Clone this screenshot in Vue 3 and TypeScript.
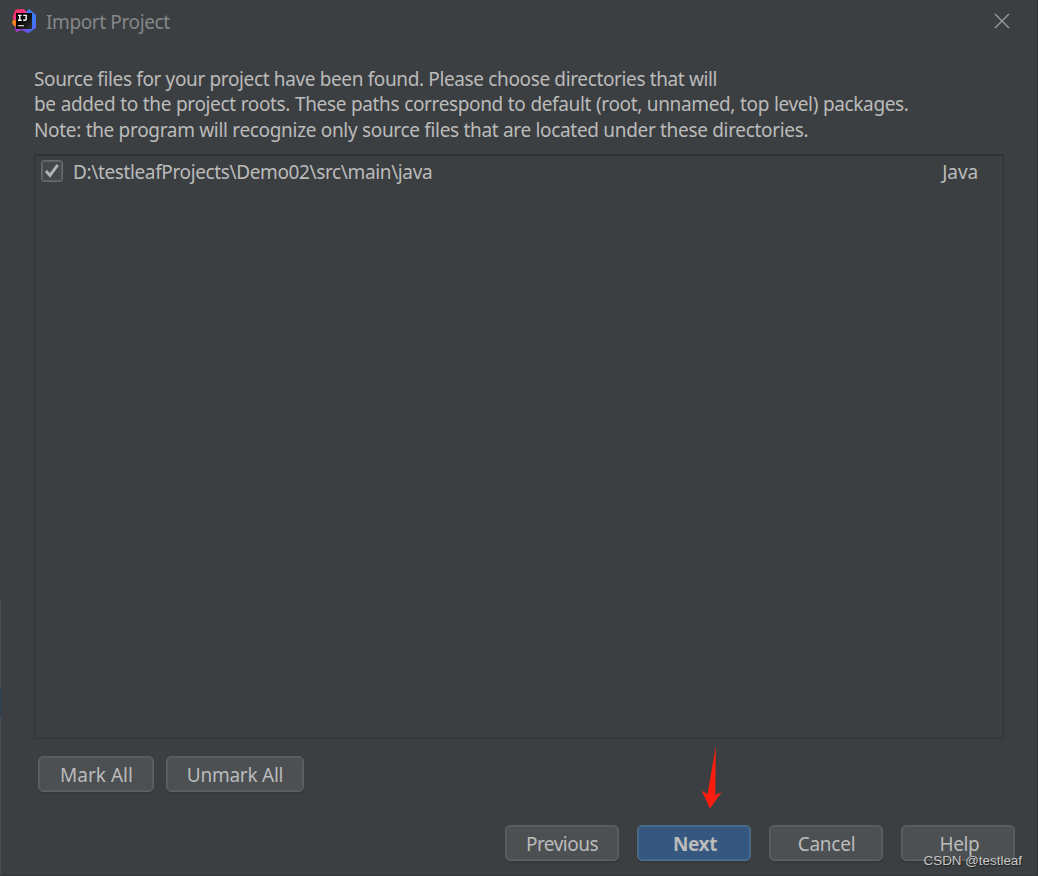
<script setup lang="ts">
import { ref } from 'vue'

interface SourceRoot {
  path: string
  language: string
  checked: boolean
}

const roots = ref<SourceRoot[]>([
  { path: 'D:\\testleafProjects\\Demo02\\src\\main\\java', language: 'Java', checked: true },
])

function setAll(checked: boolean): void {
  roots.value.forEach((root) => { root.checked = checked })
}
</script>

<template>
  <div class="dialog">
    <i class="edge"></i>
    <header class="titlebar">
      <svg class="logo" width="26" height="26" viewBox="0 0 26 26">
        <defs>
          <linearGradient id="pink" x1="0" y1="0" x2="1" y2="1">
            <stop offset="0" stop-color="#fe315d" />
            <stop offset="1" stop-color="#e9309c" />
          </linearGradient>
          <linearGradient id="blue" x1="0" y1="0" x2="1" y2="1">
            <stop offset="0" stop-color="#3f7df0" />
            <stop offset="0.6" stop-color="#3a7bf2" />
            <stop offset="1" stop-color="#6b57ff" />
          </linearGradient>
          <linearGradient id="violet" x1="0" y1="0" x2="1" y2="0">
            <stop offset="0" stop-color="#b32fc4" />
            <stop offset="1" stop-color="#4b62f5" />
          </linearGradient>
          <linearGradient id="plate" x1="0" y1="0" x2="1" y2="1">
            <stop offset="0" stop-color="#000" />
            <stop offset="0.5" stop-color="#0b0b0b" />
            <stop offset="1" stop-color="#343434" />
          </linearGradient>
        </defs>
        <path d="M14 5 18 1l7 6v13l-8 5-3-3z" fill="url(#blue)" />
        <path d="M5 17h15v5l-4 3-5-3-6 2-1-4z" fill="url(#violet)" />
        <path d="M1 14 3 11l4 3-2 5-3-2z" fill="#fc801d" />
        <path d="M4.500 1.500 13 1l3 4v8H5L1.500 10z" fill="url(#pink)" />
        <rect x="5" y="5" width="16" height="16" fill="url(#plate)" />
        <path d="M7 7.400h3.600M8.800 7.400v4.800M7 12.300h3.600M12.200 7.400h3v3.500q0 1.400-1.300 1.400h-1.700" fill="none" stroke="#fff" stroke-width="1.400" />
        <path d="M7 17.700h6" stroke="#d8d8d8" stroke-width="1.200" />
      </svg>
      <h1>Import Project</h1>
      <button class="close" aria-label="Close">
        <svg width="16" height="16" viewBox="0 0 16 16">
          <path d="M1 1 15 15M15 1 1 15" stroke="#999b9c" stroke-width="1.4" />
        </svg>
      </button>
    </header>

    <main>
      <p class="message">
        <span class="l1">Source files for your project have been found. Please choose directories that will</span>
        <span class="l2">be added to the project roots. These paths correspond to default (root, unnamed, top level) packages.</span>
        <span class="l3">Note: the program will recognize only source files that are located under these directories.</span>
      </p>
      <div class="list">
        <div v-for="root in roots" :key="root.path" class="row" @click="root.checked = !root.checked">
          <span class="check">
            <svg v-if="root.checked" width="22" height="22" viewBox="0 0 22 22">
              <path d="M5 11 9 15.400 16.700 5" fill="none" stroke="#b2b4b5" stroke-width="2.900" />
            </svg>
          </span>
          <span class="path">{{ root.path }}</span>
          <span class="lang">{{ root.language }}</span>
        </div>
      </div>
      <div class="marks">
        <button class="btn mark" @click="setAll(true)"><span>Mark All</span></button>
        <button class="btn unmark" @click="setAll(false)"><span>Unmark All</span></button>
      </div>
    </main>

    <footer>
      <button class="btn"><span class="prev">Previous</span></button>
      <button class="btn primary"><span>Next</span></button>
      <button class="btn"><span class="cancel">Cancel</span></button>
      <button class="btn"><span class="help">Help</span></button>
    </footer>

    <svg class="arrow" width="22" height="64" viewBox="0 0 22 64">
      <path d="M14.800 1 14.300 50 20.600 47.200 9 63.500 .6 45.400 6.500 49.300z" fill="#ff1d0f" />
    </svg>
    <span class="watermark">CSDN @testleaf</span>
  </div>
</template>

<style>
body { background: #3c3f41; }
</style>

<style scoped>
* { box-sizing: border-box; }
.dialog {
  position: relative;
  display: flex;
  flex-direction: column;
  width: 1038px;
  height: 876px;
  overflow: hidden;
  background: #3c3f41;
  border-right: 1px solid #2d2f30;
  border-bottom: 1px solid #37393b;
  color: #bbbbbb;
  font-family: "Noto Sans", "Open Sans", sans-serif;
  font-size: 19px;
}
.edge {
  position: absolute;
  left: 0;
  top: 601px;
  width: 1px;
  height: 275px;
  background: linear-gradient(#4a4d4f 0 86px, #2c4259 86px 116px, #4a4d4f 116px);
}
.titlebar {
  display: flex;
  align-items: center;
  height: 44px;
  padding: 0 27px 2px 11px;
}
.logo { display: block; margin-right: 9px; }
h1 {
  margin: 2px 0 0;
  font-size: 19px;
  font-weight: 400;
  line-height: 26px;
  color: #858788;
  letter-spacing: -0.38px;
}
.close {
  margin-left: auto;
  padding: 0;
  border: 0;
  background: none;
  line-height: 0;
}
main { padding: 22px 33px 0 34px; }
.message { margin: 0; height: 88px; padding-top: 0.6px; line-height: 25.5px; }
.message span { display: block; white-space: nowrap; }
.l1 { letter-spacing: -0.365px; }
.l2 { letter-spacing: -0.365px; word-spacing: 0.4px; }
.l3 { letter-spacing: -0.318px; }
.list {
  height: 585px;
  border: 1px solid #323334;
  border-top-width: 2px;
}
.row { display: flex; align-items: center; height: 31px; padding: 0 25px 0 6px; }
.check {
  width: 22px;
  height: 22px;
  margin-top: -1px;
  border: 1px solid #696b6c;
  border-radius: 3px;
  background: #43494a;
  box-shadow: inset 0 0 0 1px #5a5e5f;
}
.check svg { display: block; margin: -1px; }
.path { margin: 0 auto 0 10px; letter-spacing: -0.37px; }
.lang { letter-spacing: -0.1px; }
.marks { display: flex; gap: 12px; padding: 17px 0 0 4px; }
.btn {
  width: 114px;
  height: 36px;
  padding: 0;
  border: 1px solid #5e6162;
  border-radius: 5px;
  background: #4c5052;
  box-shadow: inset 0 0 0 1px #565a5b, 0 2px 1px #36393b;
  color: #bbbbbb;
  font-family: inherit;
  font-size: 19px;
  line-height: 34px;
}
.btn span { position: relative; top: 1px; left: 0.5px; white-space: nowrap; letter-spacing: -0.25px; }
.btn .prev { left: 0; letter-spacing: -0.5px; }
.btn .help { left: 1.5px; letter-spacing: -0.4px; }
.btn.mark { width: 116px; }
.btn.mark span { letter-spacing: 0; }
.btn.unmark { width: 138px; }
.btn.unmark span { left: 0; }
.btn.primary {
  border-color: #4c708c;
  background: #365880;
  box-shadow: inset 0 0 0 1px #41668a, 0 2px 1px #36393b;
  font-weight: 700;
}
.btn.primary span { left: 1px; letter-spacing: -0.4px; }
footer { display: flex; gap: 18px; padding: 33px 0 0 505px; }
.arrow { position: absolute; left: 701px; top: 745px; }
.watermark {
  position: absolute;
  right: 15px;
  bottom: 5px;
  color: #c6c7c8;
  font: 13.4px/18px "Liberation Sans", Arial, sans-serif;
  text-shadow: 1px 1px 1px #222;
}
</style>
